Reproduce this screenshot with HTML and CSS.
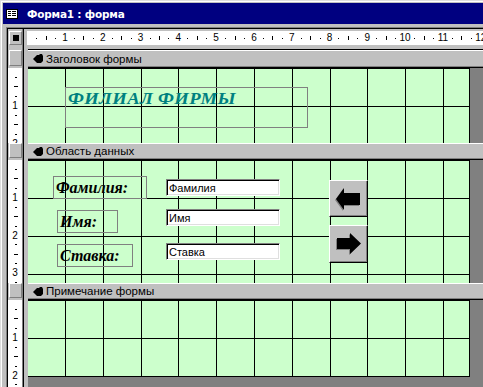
FILE: index.html
```html
<!DOCTYPE html>
<html lang="ru">
<head>
  <meta charset="UTF-8" />
  <title>Форма1 : форма</title>
  <link rel="stylesheet" href="styles.css">
</head>
<body>

  <div class="window">
    <div class="titlebar">
      <svg class="form-icon" width="12" height="10" viewBox="0 0 12 10">
        <rect x="0.5" y="0.5" width="11" height="9" fill="#fff" stroke="#000" />
        <rect x="2" y="2" width="3" height="1" fill="#000" />
        <rect x="6" y="2" width="4" height="1" fill="#000" />
        <rect x="2" y="4" width="3" height="1" fill="#000" />
        <rect x="6" y="4" width="4" height="1" fill="#000" />
        <rect x="2" y="6" width="3" height="1" fill="#000" />
        <rect x="6" y="6" width="4" height="1" fill="#000" />
      </svg>
      <span>Форма1 : форма</span>
    </div>

    <div class="client">
      <div class="designer">

        <!-- ruler row -->
        <div class="side corner-cell"><div class="corner"><i></i></div></div>
        <div class="main ruler-cell">
          <div class="ruler">
            <div class="cm"><span class="d"></span><span class="h"></span><span class="d"></span><span>1</span></div>
            <div class="cm"><span class="d"></span><span class="h"></span><span class="d"></span><span>2</span></div>
            <div class="cm"><span class="d"></span><span class="h"></span><span class="d"></span><span>3</span></div>
            <div class="cm"><span class="d"></span><span class="h"></span><span class="d"></span><span>4</span></div>
            <div class="cm"><span class="d"></span><span class="h"></span><span class="d"></span><span>5</span></div>
            <div class="cm"><span class="d"></span><span class="h"></span><span class="d"></span><span>6</span></div>
            <div class="cm"><span class="d"></span><span class="h"></span><span class="d"></span><span>7</span></div>
            <div class="cm"><span class="d"></span><span class="h"></span><span class="d"></span><span>8</span></div>
            <div class="cm"><span class="d"></span><span class="h"></span><span class="d"></span><span>9</span></div>
            <div class="cm"><span class="d"></span><span class="h"></span><span class="d"></span><span>10</span></div>
            <div class="cm"><span class="d"></span><span class="h"></span><span class="d"></span><span>11</span></div>
            <div class="cm"><span class="d"></span><span class="h"></span><span class="d"></span><span>12</span></div>
          </div>
        </div>

        <!-- form header -->
        <div class="side"><div class="selector first"></div></div>
        <div class="main bar-cell">
          <div class="bar first">
            <svg class="hand" width="10" height="9" viewBox="0 0 10 9"><path d="M0 5 L4 1 H6 L7 0 H9 L10 2 V7 L8 9 H4 Z" fill="#000" /></svg>
            <span>Заголовок формы</span>
          </div>
        </div>
        <div class="side vruler">
          <span class="s"></span><span class="l"></span><span class="s"></span><span>1</span>
          <span class="s"></span><span class="l"></span><span class="s"></span><span>2</span>
        </div>
        <div class="main sec-cell">
          <div class="sec">
            <div class="label heading" style="left:37px; top:19px; width:243px; height:41px;"><span>ФИЛИАЛ ФИРМЫ</span></div>
          </div>
        </div>

        <!-- detail -->
        <div class="side"><div class="selector"></div></div>
        <div class="main bar-cell">
          <div class="bar">
            <svg class="hand" width="10" height="9" viewBox="0 0 10 9"><path d="M0 5 L4 1 H6 L7 0 H9 L10 2 V7 L8 9 H4 Z" fill="#000" /></svg>
            <span>Область данных</span>
          </div>
        </div>
        <div class="side vruler">
          <span class="s"></span><span class="l"></span><span class="s"></span><span>1</span>
          <span class="s"></span><span class="l"></span><span class="s"></span><span>2</span>
          <span class="s"></span><span class="l"></span><span class="s"></span><span>3</span>
          <span class="s"></span>
        </div>
        <div class="main sec-cell">
          <div class="sec">
            <div class="label" style="left:25px; top:16px; width:94px; height:23px;">Фамилия:</div>
            <div class="label" style="left:29px; top:50px; width:61px; height:23px;">Имя:</div>
            <div class="label" style="left:29px; top:84px; width:76px; height:23px;">Ставка:</div>

            <div class="field" style="left:138px; top:19px;">Фамилия</div>
            <div class="field" style="left:138px; top:49px;">Имя</div>
            <div class="field" style="left:138px; top:83px;">Ставка</div>

            <div class="btn" style="left:301px; top:20px; height:37px;">
              <svg width="37" height="35" viewBox="0 0 37 35">
                <path d="M6 18 L14 7 V12 H30 V24 H14 V29 Z" fill="#808080" transform="translate(-1 1)" />
                <path d="M6 18 L14 7 V12 H30 V24 H14 V29 Z" fill="#000" />
              </svg>
            </div>
            <div class="btn" style="left:301px; top:65px; height:38px;">
              <svg width="37" height="36" viewBox="0 0 37 36">
                <path d="M7 12 H20 V7 L31 17.5 L20 28 V23 H7 Z" fill="#808080" transform="translate(-1 1)" />
                <path d="M7 12 H20 V7 L31 17.5 L20 28 V23 H7 Z" fill="#000" />
              </svg>
            </div>
          </div>
        </div>

        <!-- form footer -->
        <div class="side"><div class="selector"></div></div>
        <div class="main bar-cell">
          <div class="bar">
            <svg class="hand" width="10" height="9" viewBox="0 0 10 9"><path d="M0 5 L4 1 H6 L7 0 H9 L10 2 V7 L8 9 H4 Z" fill="#000" /></svg>
            <span>Примечание формы</span>
          </div>
        </div>
        <div class="side vruler">
          <span class="s"></span><span class="l"></span><span class="s"></span><span>1</span>
          <span class="s"></span><span class="l"></span><span class="s"></span><span>2</span>
          <span class="s"></span><span class="l"></span>
        </div>
        <div class="main sec-cell">
          <div class="sec last"></div>
        </div>

      </div>
    </div>
  </div>

</body>
</html>
```

FILE: styles.css
```css
* {
  box-sizing: border-box;
}
html, body {
  margin: 0;
  width: 483px;
  height: 387px;
  overflow: hidden;
}
body {
  background: #c0c0c0;
  font-family: 'Liberation Sans', Arial, sans-serif;
  font-size: 11px;
  color: #000;
}
.window {
  height: 387px;
  padding: 3px 0 0 3px;
  box-shadow: inset 1px 1px #dfdfdf, inset 2px 2px #fff;
}
.titlebar {
  height: 21px;
  background: #000080;
  color: #fff;
  display: flex;
  align-items: center;
  gap: 9px;
  padding-left: 3px;
  font-family: 'DejaVu Sans', Verdana, sans-serif;
  font-size: 10.5px;
  font-weight: bold;
  letter-spacing: -0.2px;
  white-space: nowrap;
}
.form-icon {
  flex: none;
}
.client {
  height: 363px;
  padding: 3px 0 0 3px;
}
.designer {
  height: 100%;
  border-top: 1px solid #808080;
  border-left: 1px solid #808080;
  padding: 1px 0 0 1px;
  box-shadow: inset 1px 1px #000;
  display: grid;
  grid-template-columns: 16px 1fr;
  grid-template-rows: 20px 19px 75px 17px 123px 17px 1fr;
}

/* left column */
.side {
  border-right: 1px solid #000;
  box-shadow: inset -1px 0 #808080;
  overflow: hidden;
}
.corner {
  margin: 2px 0 0 1px;
  width: 13px;
  height: 14px;
  border: 1px solid;
  border-color: #fff #808080 #808080 #fff;
  display: flex;
  align-items: center;
  justify-content: center;
}
.corner i {
  width: 6px;
  height: 6px;
  background: #000;
}
.selector {
  margin-left: 1px;
  width: 13px;
  height: 15px;
  border: 1px solid;
  border-color: #fff #808080 #808080 #fff;
}
.selector.first {
  margin-top: 1px;
  height: 16px;
}
.vruler {
  background: #fff;
  padding-top: 4.725px;
  display: flex;
  flex-direction: column;
}
.vruler span {
  flex: none;
  width: 14px;
  height: 9.45px;
  display: flex;
  align-items: center;
  justify-content: center;
  font-size: 10px;
  line-height: 1;
}
.vruler .s::before {
  content: "";
  width: 2px;
  height: 1px;
  margin-left: 2px;
  background: #000;
}
.vruler .l::before {
  content: "";
  width: 4px;
  height: 1px;
  margin-left: 2px;
  background: #000;
}

/* horizontal ruler */
.main {
  min-width: 0;
}
.ruler-cell {
  padding: 2px 0 0 3px;
}
.ruler {
  height: 14px;
  background: #fff;
  display: flex;
  padding-left: 4.9px;
  overflow: hidden;
}
.cm {
  flex: none;
  width: 37.8px;
  display: flex;
}
.cm span {
  flex: none;
  width: 9.45px;
  display: flex;
  align-items: center;
  justify-content: center;
  font-size: 10px;
  line-height: 1;
}
.cm .d::before {
  content: "";
  width: 1px;
  height: 1px;
  background: #000;
}
.cm .h::before {
  content: "";
  width: 1px;
  height: 4px;
  background: #000;
}

/* section bars */
.bar-cell {
  padding-left: 4px;
}
.bar {
  height: 100%;
  display: flex;
  align-items: center;
  gap: 3px;
  padding-left: 5px;
  background: #c0c0c0;
  border-bottom: 1px solid #000;
  box-shadow: inset 0 1px #fff, inset 0 -1px #808080;
  font-size: 11.5px;
  white-space: nowrap;
}
.bar.first {
  border-top: 1px solid #000;
}
.hand {
  flex: none;
}

/* sections */
.sec-cell {
  padding-left: 4px;
  background: linear-gradient(to right, #c0c0c0 4px, #808080 4px);
  overflow: hidden;
}
.sec {
  position: relative;
  width: 442px;
  height: 100%;
  border-right: 1px solid #000;
  background-color: #ccffcc;
  background-image:
    linear-gradient(to right, #000 0 1px, transparent 1px 38px, #000 38px 39px, transparent 39px 76px, #000 76px 77px, transparent 77px 113px, #000 113px 114px, transparent 114px 151px, #000 151px 152px, transparent 152px),
    linear-gradient(to bottom, #000 0 1px, transparent 1px 38px, #000 38px 39px, transparent 39px 76px, #000 76px 77px, transparent 77px 113px, #000 113px 114px, transparent 114px 151px, #000 151px 152px, transparent 152px);
  background-size: 189px 100%, 100% 189px;
  background-position: 37px 0, 0 38px;
  background-repeat: repeat-x, repeat-y;
}
.sec.last {
  height: 77px;
  border-bottom: 1px solid #000;
}

/* controls */
.label {
  position: absolute;
  display: flex;
  align-items: center;
  padding-left: 2px;
  border: 1px solid #808080;
  font-family: 'Liberation Serif', 'Times New Roman', serif;
  font-size: 16px;
  font-weight: bold;
  font-style: italic;
  white-space: nowrap;
}
.label.heading {
  align-items: flex-start;
  padding-top: 1px;
  font-size: 17px;
  letter-spacing: 0.3px;
  color: #008080;
}
.heading span {
  display: inline-block;
  transform: scaleX(1.1);
  transform-origin: 0 0;
}
.field {
  position: absolute;
  width: 114px;
  height: 17px;
  display: flex;
  align-items: center;
  padding-left: 2px;
  background: #fff;
  border: 1px solid;
  border-color: #808080 #fff #fff #808080;
  box-shadow: inset 1px 1px #000, inset -1px -1px #dfdfdf;
  white-space: nowrap;
}
.btn {
  position: absolute;
  width: 39px;
  background: #c0c0c0;
  border: 1px solid;
  border-color: #fff #000 #000 #fff;
  box-shadow: inset -1px -1px #808080;
}
.btn svg {
  display: block;
}
```
